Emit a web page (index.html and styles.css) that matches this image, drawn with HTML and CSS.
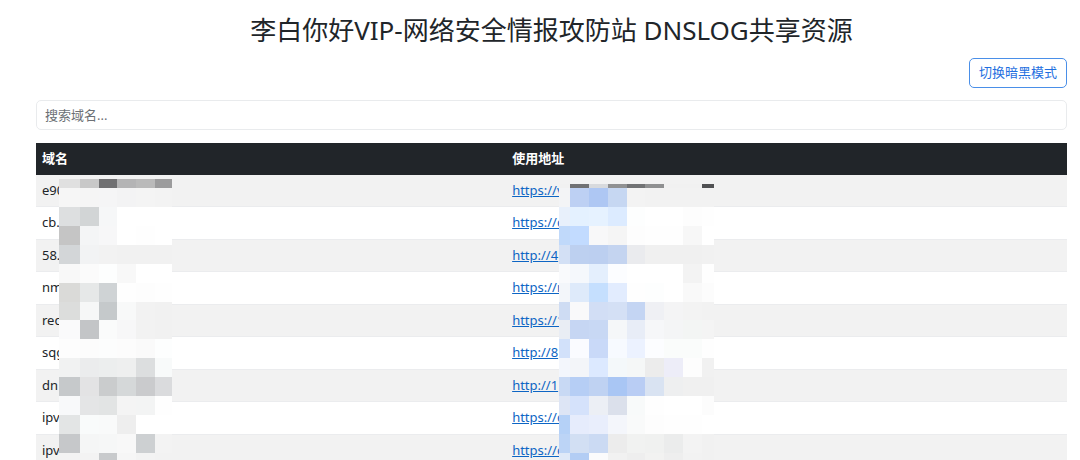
FILE: index.html
```
<!DOCTYPE html>
<html lang="zh-CN">

<head>
  <meta charset="UTF-8" />
  <meta name="viewport" content="width=device-width, initial-scale=1" />
  <title>李白你好VIP-网络安全情报攻防站 DNSLOG共享资源</title>
  <link rel="stylesheet" href="styles.css">
</head>

<body>
  <main class="container">
    <h1>李白你好VIP-网络安全情报攻防站 DNSLOG共享资源</h1>

    <div class="toolbar">
      <button type="button" class="btn-mode">切换暗黑模式</button>
    </div>

    <input type="text" class="search" id="searchInput" placeholder="搜索域名..." aria-label="搜索域名" />

    <table class="domain-table">
      <thead>
        <tr>
          <th class="col-domain" scope="col">域名</th>
          <th scope="col">使用地址</th>
        </tr>
      </thead>
      <tbody id="domainList">
        <tr>
          <td>e90<svg class="mosaic mosaic-domain" id="domainMosaic" aria-hidden="true"></svg></td>
          <td><a href="#">https://v</a><svg class="mosaic mosaic-url" id="urlMosaic" aria-hidden="true"></svg></td>
        </tr>
        <tr>
          <td>cb.</td>
          <td><a href="#">https://c</a></td>
        </tr>
        <tr>
          <td>58.</td>
          <td><a href="#">http://4</a></td>
        </tr>
        <tr>
          <td>nm</td>
          <td><a href="#">https://r</a></td>
        </tr>
        <tr>
          <td>rec</td>
          <td><a href="#">https://1</a></td>
        </tr>
        <tr>
          <td>sqg</td>
          <td><a href="#">http://8</a></td>
        </tr>
        <tr>
          <td>dn</td>
          <td><a href="#">http://1</a></td>
        </tr>
        <tr>
          <td>ipv</td>
          <td><a href="#">https://c</a></td>
        </tr>
        <tr>
          <td>ipv</td>
          <td><a href="#">https://c</a></td>
        </tr>
      </tbody>
    </table>
  </main>

  <script src="script.js"></script>
</body>

</html>
```
FILE: styles.css
```
* {
  box-sizing: border-box;
}

body {
  margin: 0;
  height: 100vh;
  overflow: hidden;
  font-family: "Noto Sans", "Noto Sans CJK SC", sans-serif;
  font-size: 13px;
  line-height: 1.5;
  background-color: #fff;
  color: #212529;
}

.container {
  padding: 13px 13px 0 36px;
}

h1 {
  margin: 0 0 11px;
  font-size: 26px;
  font-weight: 400;
  line-height: 34px;
  text-align: center;
}

.toolbar {
  display: flex;
  justify-content: flex-end;
  margin-bottom: 12px;
}

.btn-mode {
  height: 30px;
  padding: 0 9px;
  border: 1px solid #4a8fe8;
  border-radius: 5px;
  background-color: #fff;
  color: #1f6fe0;
  font: inherit;
  cursor: pointer;
}

.search {
  display: block;
  width: 100%;
  height: 30px;
  margin-bottom: 13px;
  padding: 0 8px;
  border: 1px solid #e9ebed;
  border-radius: 5px;
  color: #212529;
  font: inherit;
}

.search::placeholder {
  color: #6c7075;
  opacity: 1;
}

.domain-table {
  width: 100%;
  table-layout: fixed;
  border-collapse: separate;
  border-spacing: 0;
}

.col-domain {
  width: 45.6%;
}

th,
td {
  position: relative;
  padding: 6px;
  text-align: left;
}

th {
  background-color: #212529;
  color: #fff;
}

td {
  border-bottom: 1px solid #ebecee;
}

tbody tr:nth-child(odd) td {
  background-color: #f2f2f2;
}

a {
  color: #0d65c4;
}

/* pixelated cover over the hidden part of each column */
.mosaic {
  position: absolute;
  top: 4px;
  z-index: 1;
  height: 300px;
}

.mosaic-domain {
  left: 23px;
  width: 113px;
}

.mosaic-url {
  left: 53px;
  width: 155px;
}
```
FILE: script.js
```
// Row edges shared by both mosaics, measured from their top
const rowEdges = [0, 9, 28, 47, 66, 85, 104, 123, 141, 160, 179, 198, 217, 236, 255, 274, 293];

const domainColors = [
  "e0e0e0 c8c8c8 707072 b4b4b5 bababa 9c9c9d",
  "f6f6f6 f5f5f5 f5f5f6 f3f3f4 f4f4f4 f3f3f3",
  "dddfe0 d2d5d6 f6f7f8 ffffff ffffff ffffff",
  "c5c5c5 f4f5f6 f7f7f8 ffffff fefefe ffffff",
  "d3d6d8 f2f3f4 f2f2f2 f1f1f1 f1f1f1 f1f1f1",
  "f8f8f8 fbfbfb fdfefe f8f8f8 ffffff ffffff",
  "dadad8 e6e8e8 cfd3d5 fefefe fdfdfd fefefe",
  "dcdddc f6f7f7 c5c9cb f8f9f9 f2f2f2 f1f1f1",
  "fafafb c3c5c7 fafbfb f7f7f8 f2f2f2 f1f1f1",
  "fdfdfd fcfcfc fcfdfd fcfcfc fafafa fdfefe",
  "f1f2f2 ebeced eceeee eeefef dcdedf f8fafa",
  "c6c9cb e3e3e4 cacccd d5d8d9 cacbcd dadbdd",
  "f8f9fa e4e5e6 e2e4e4 f4f4f4 f3f4f4 fefefe",
  "e3e5e5 f9fbfb f9fafa eeeeee ffffff ffffff",
  "c6c8ca f5f6f6 f6f7f7 f8f8f8 cdd0d2 f3f3f3",
  "f3f3f3 f3f3f3 c8cacc f6f6f6 f3f3f3 f2f2f2"
];

const urlColors = [
  "f1f1f1 707173 d8dadd 909192 717274 8f9091 f1f1f1 f1f1f1 505153",
  "f3f4f6 bdd0f3 aec7f3 c6d7f2 f3f3f3 f2f2f2 f2f2f2 f2f2f2 f2f2f2",
  "e8f0fb e4f1ff e6f2ff dcebff fdfefe ffffff ffffff fdfdfd fefefe",
  "c0d9fa c2dbff f8f8f9 f5f5f5 fdfdfd fefefe fefefe f7f7f7 ffffff",
  "d3e0f5 bdd0f0 bccff0 c4d4f0 eaebee f0f0f0 f0f0f0 f0f0f0 f1f1f1",
  "f9fafc f5f8fc e4effd fcfdff ffffff ffffff ffffff f3f3f3 fefefe",
  "f3f6fa deeafa c5dffe e2ecfe fefefe fdfefe ffffff f9f9f9 fcfcfc",
  "cedcf3 f9f9fa d2def5 d4e0f5 c4d5f3 eff0f4 f4f4f5 f3f3f3 f2f2f2",
  "e9edf4 c6d6f3 c8d8f4 f5f7f9 e8edf7 f6f7f9 f4f5f6 f3f5f4 f4f4f4",
  "d2e1fa fafbff c9d9f8 f7faff ecf2ff fcfdff fafcfb fafcfb fefefe",
  "f3f6fc f3f5f9 dce9ff f4f8fa f5f7f7 ececec ededf8 fdfdfd f1f1f1",
  "c8d9f4 b6cef5 bfd2f2 a9c6f4 b9cdf4 d9e3f2 eeeff0 f0f0f0 f0f0f0",
  "dde5f5 d5e2fb eceff5 dbe0eb f8fafa fefefe ffffff ffffff fcfcfc",
  "b5d1f7 e6ecfc e9eefc f4f6fb f9fafa fdfdfd fefefe fefefe ffffff",
  "bcd4f6 d2dff3 cbdaf3 ececec f1f2f1 f0f1f0 ebecec f3f3f3 f1f1f1",
  "dfe9f8 b3cdf4 fbfbfc f1f1f1 eeeeee f2f2f1 eeeeee f2f2f2 f1f1f1"
];

function drawMosaic(id, colEdges, colors, firstTop) {
  const svg = document.getElementById(id);
  colors.forEach((line, row) => {
    const top = row === 0 ? firstTop : rowEdges[row];
    line.split(" ").forEach((color, col) => {
      const rect = document.createElementNS("http://www.w3.org/2000/svg", "rect");
      rect.setAttribute("x", colEdges[col]);
      rect.setAttribute("y", top);
      rect.setAttribute("width", colEdges[col + 1] - colEdges[col]);
      rect.setAttribute("height", rowEdges[row + 1] - top);
      rect.setAttribute("fill", `#${color}`);
      svg.appendChild(rect);
    });
  });
}

drawMosaic("domainMosaic", [0, 21, 40, 58, 77, 96, 113], domainColors, 0);
drawMosaic("urlMosaic", [0, 11, 30, 49, 68, 86, 105, 124, 143, 155], urlColors, 5);

// Filter rows by domain
document.getElementById("searchInput").addEventListener("input", (event) => {
  const keyword = event.target.value.trim().toLowerCase();
  document.querySelectorAll("#domainList tr").forEach(row => {
    row.hidden = !row.cells[0].textContent.toLowerCase().includes(keyword);
  });
});
```
